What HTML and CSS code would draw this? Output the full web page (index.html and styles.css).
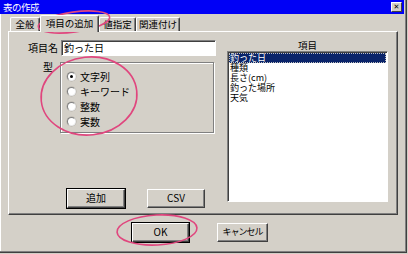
FILE: index.html
```html
<!DOCTYPE html>
<html lang="ja">
<head>
<meta charset="utf-8">
<link rel="stylesheet" href="styles.css">
</head>
<body>
<div class="window">
  <div class="titlebar">
    <span class="title">表の作成</span>
    <span class="close">✕</span>
  </div>
  <div class="tabs">
    <div class="tab">全般</div>
    <div class="tab active">項目の追加</div>
    <div class="tab">値指定</div>
    <div class="tab">関連付け</div>
  </div>
  <div class="panel">
    <div class="left">
      <div class="name-row">
        <span class="label">項目名</span>
        <div class="input">釣った日</div>
      </div>
      <div class="type-row">
        <span class="label type-label">型</span>
        <div class="group">
          <div class="radio-row"><span class="radio checked"></span><span>文字列</span></div>
          <div class="radio-row"><span class="radio"></span><span>キーワード</span></div>
          <div class="radio-row"><span class="radio"></span><span>整数</span></div>
          <div class="radio-row"><span class="radio"></span><span>実数</span></div>
        </div>
      </div>
      <div class="btn-row">
        <div class="btn focus">追加</div>
        <div class="btn">CSV</div>
      </div>
    </div>
    <div class="right">
      <div class="list-head">項目</div>
      <div class="list">
        <div class="item selected">釣った日</div>
        <div class="item">種類</div>
        <div class="item">長さ(cm)</div>
        <div class="item">釣った場所</div>
        <div class="item">天気</div>
      </div>
    </div>
  </div>
  <div class="footer">
    <div class="btn ok focus">OK</div>
    <div class="btn cancel">キャンセル</div>
  </div>
  <svg class="annot" width="408" height="254" viewBox="0 0 408 254">
    <ellipse cx="74" cy="22" rx="36" ry="10" transform="rotate(-8 74 22)"/>
    <ellipse cx="89" cy="96" rx="48" ry="39" transform="rotate(-6 89 96)"/>
    <ellipse cx="157" cy="230" rx="40" ry="15" transform="rotate(-3 157 230)"/>
  </svg>
</div>
</body>
</html>
```

FILE: styles.css
```css
* { box-sizing: border-box; }
html, body { margin: 0; padding: 0; background: #d4d0c8; }
body {
  font-family: "Noto Sans CJK JP", "DejaVu Sans", sans-serif;
  font-size: 10px;
  color: #000;
}
.window {
  position: relative;
  width: 407px;
  height: 253px;
  background: #d4d0c8;
  border-right: 1px solid #404040;
  border-bottom: 1px solid #404040;
  box-shadow: inset -1px -1px 0 #808080, inset 1px 0 0 #ffffff;
  overflow: hidden;
}
.titlebar {
  width: 404px;
  height: 14px;
  background: #0000f6;
  display: flex;
  align-items: center;
  justify-content: space-between;
  padding: 0 2px 0 3px;
}
.title {
  color: #fff;
  font-size: 9.5px;
  line-height: 14px;
  letter-spacing: -0.5px;
}
.close {
  width: 11px;
  height: 10px;
  background: #d4d0c8;
  border: 1px solid;
  border-color: #fff #404040 #404040 #fff;
  font-size: 7px;
  font-weight: bold;
  line-height: 8px;
  text-align: center;
  color: #000;
  font-family: "DejaVu Sans", sans-serif;
}
.tabs {
  display: flex;
  align-items: flex-end;
  height: 17px;
  padding-left: 10px;
}
.tab {
  height: 14px;
  border-top: 1px solid #fff;
  border-left: 1px solid #fff;
  border-right: 1px solid #404040;
  border-radius: 2px 2px 0 0;
  box-shadow: inset -1px 0 0 #808080;
  text-align: center;
  line-height: 12px;
  font-size: 9.5px;
}
.tab:nth-child(1) { width: 30px; }
.tab:nth-child(2) { width: 59px; }
.tab:nth-child(3) { width: 37px; }
.tab:nth-child(4) { width: 44px; }
.tab.active {
  height: 17px;
  line-height: 15px;
  position: relative;
  z-index: 1;
  margin-bottom: -1px;
  background: #d4d0c8;
}
.panel {
  margin-left: 8px;
  width: 390px;
  height: 184px;
  border-top: 1px solid #fff;
  border-left: 1px solid #fff;
  border-right: 1px solid #404040;
  border-bottom: 1px solid #404040;
  box-shadow: inset -1px -1px 0 #808080;
  display: grid;
  grid-template-columns: 190px 161px;
  column-gap: 11px;
  padding: 8px 0 0 17px;
}
.name-row, .type-row { display: flex; align-items: flex-start; }
.label {
  width: 33px;
  text-align: right;
  line-height: 16px;
  padding-right: 1px;
}
.input {
  margin-left: 2px;
  width: 155px;
  height: 16px;
  background: #fff;
  border: 1px solid;
  border-color: #808080 #fff #fff #808080;
  box-shadow: inset 1px 1px 0 #404040;
  padding-left: 2px;
  line-height: 14px;
}
.type-row { margin-top: 6px; }
.type-label {
  width: 34px;
  line-height: 10px;
  padding-right: 7px;
}
.group {
  width: 154px;
  height: 71px;
  border: 1px solid #808080;
  box-shadow: inset 1px 1px 0 #fff, 1px 1px 0 #fff;
  padding: 6px 0 0 6px;
}
.radio-row {
  display: flex;
  align-items: center;
  height: 15px;
  gap: 4px;
}
.radio {
  width: 9px;
  height: 9px;
  border-radius: 50%;
  background: #fff;
  border: 1px solid;
  border-color: #808080 #e8e8e8 #e8e8e8 #808080;
  box-shadow: 0 0 0 0.5px #b0aca4;
  position: relative;
}
.radio.checked::after {
  content: "";
  position: absolute;
  left: 2px;
  top: 2px;
  width: 3px;
  height: 3px;
  border-radius: 50%;
  background: #000;
}
.btn-row {
  display: flex;
  gap: 22px;
  margin-top: 56px;
  padding-left: 41px;
}
.btn {
  width: 58px;
  height: 19px;
  border: 1px solid;
  border-color: #fff #404040 #404040 #fff;
  box-shadow: inset -1px -1px 0 #808080;
  text-align: center;
  line-height: 16px;
  white-space: nowrap;
}
.btn.focus {
  outline: 1px solid #000;
}
.list-head {
  height: 11px;
  text-align: center;
  line-height: 10px;
  font-size: 9.5px;
}
.list {
  height: 151px;
  background: #fff;
  border: 1px solid;
  border-color: #808080 #fff #fff #808080;
  box-shadow: inset 1px 1px 0 #404040;
  padding: 1px 1px 0 1px;
}
.item {
  height: 10px;
  line-height: 10px;
  padding-left: 1px;
  font-size: 9px;
  white-space: nowrap;
}
.item.selected {
  background: #0a246a;
  color: #fff;
  outline: 1px dotted #c0c0c0;
  outline-offset: -1px;
}
.footer {
  display: flex;
  gap: 28px;
  padding: 8px 0 0 132px;
}
.footer .ok { width: 57px; }
.footer .cancel {
  width: 51px;
  font-size: 9px;
  letter-spacing: -1px;
}
.annot {
  position: absolute;
  left: 0;
  top: 0;
  pointer-events: none;
}
.annot ellipse {
  fill: none;
  stroke: #e0467e;
  stroke-width: 1.6;
}
```
